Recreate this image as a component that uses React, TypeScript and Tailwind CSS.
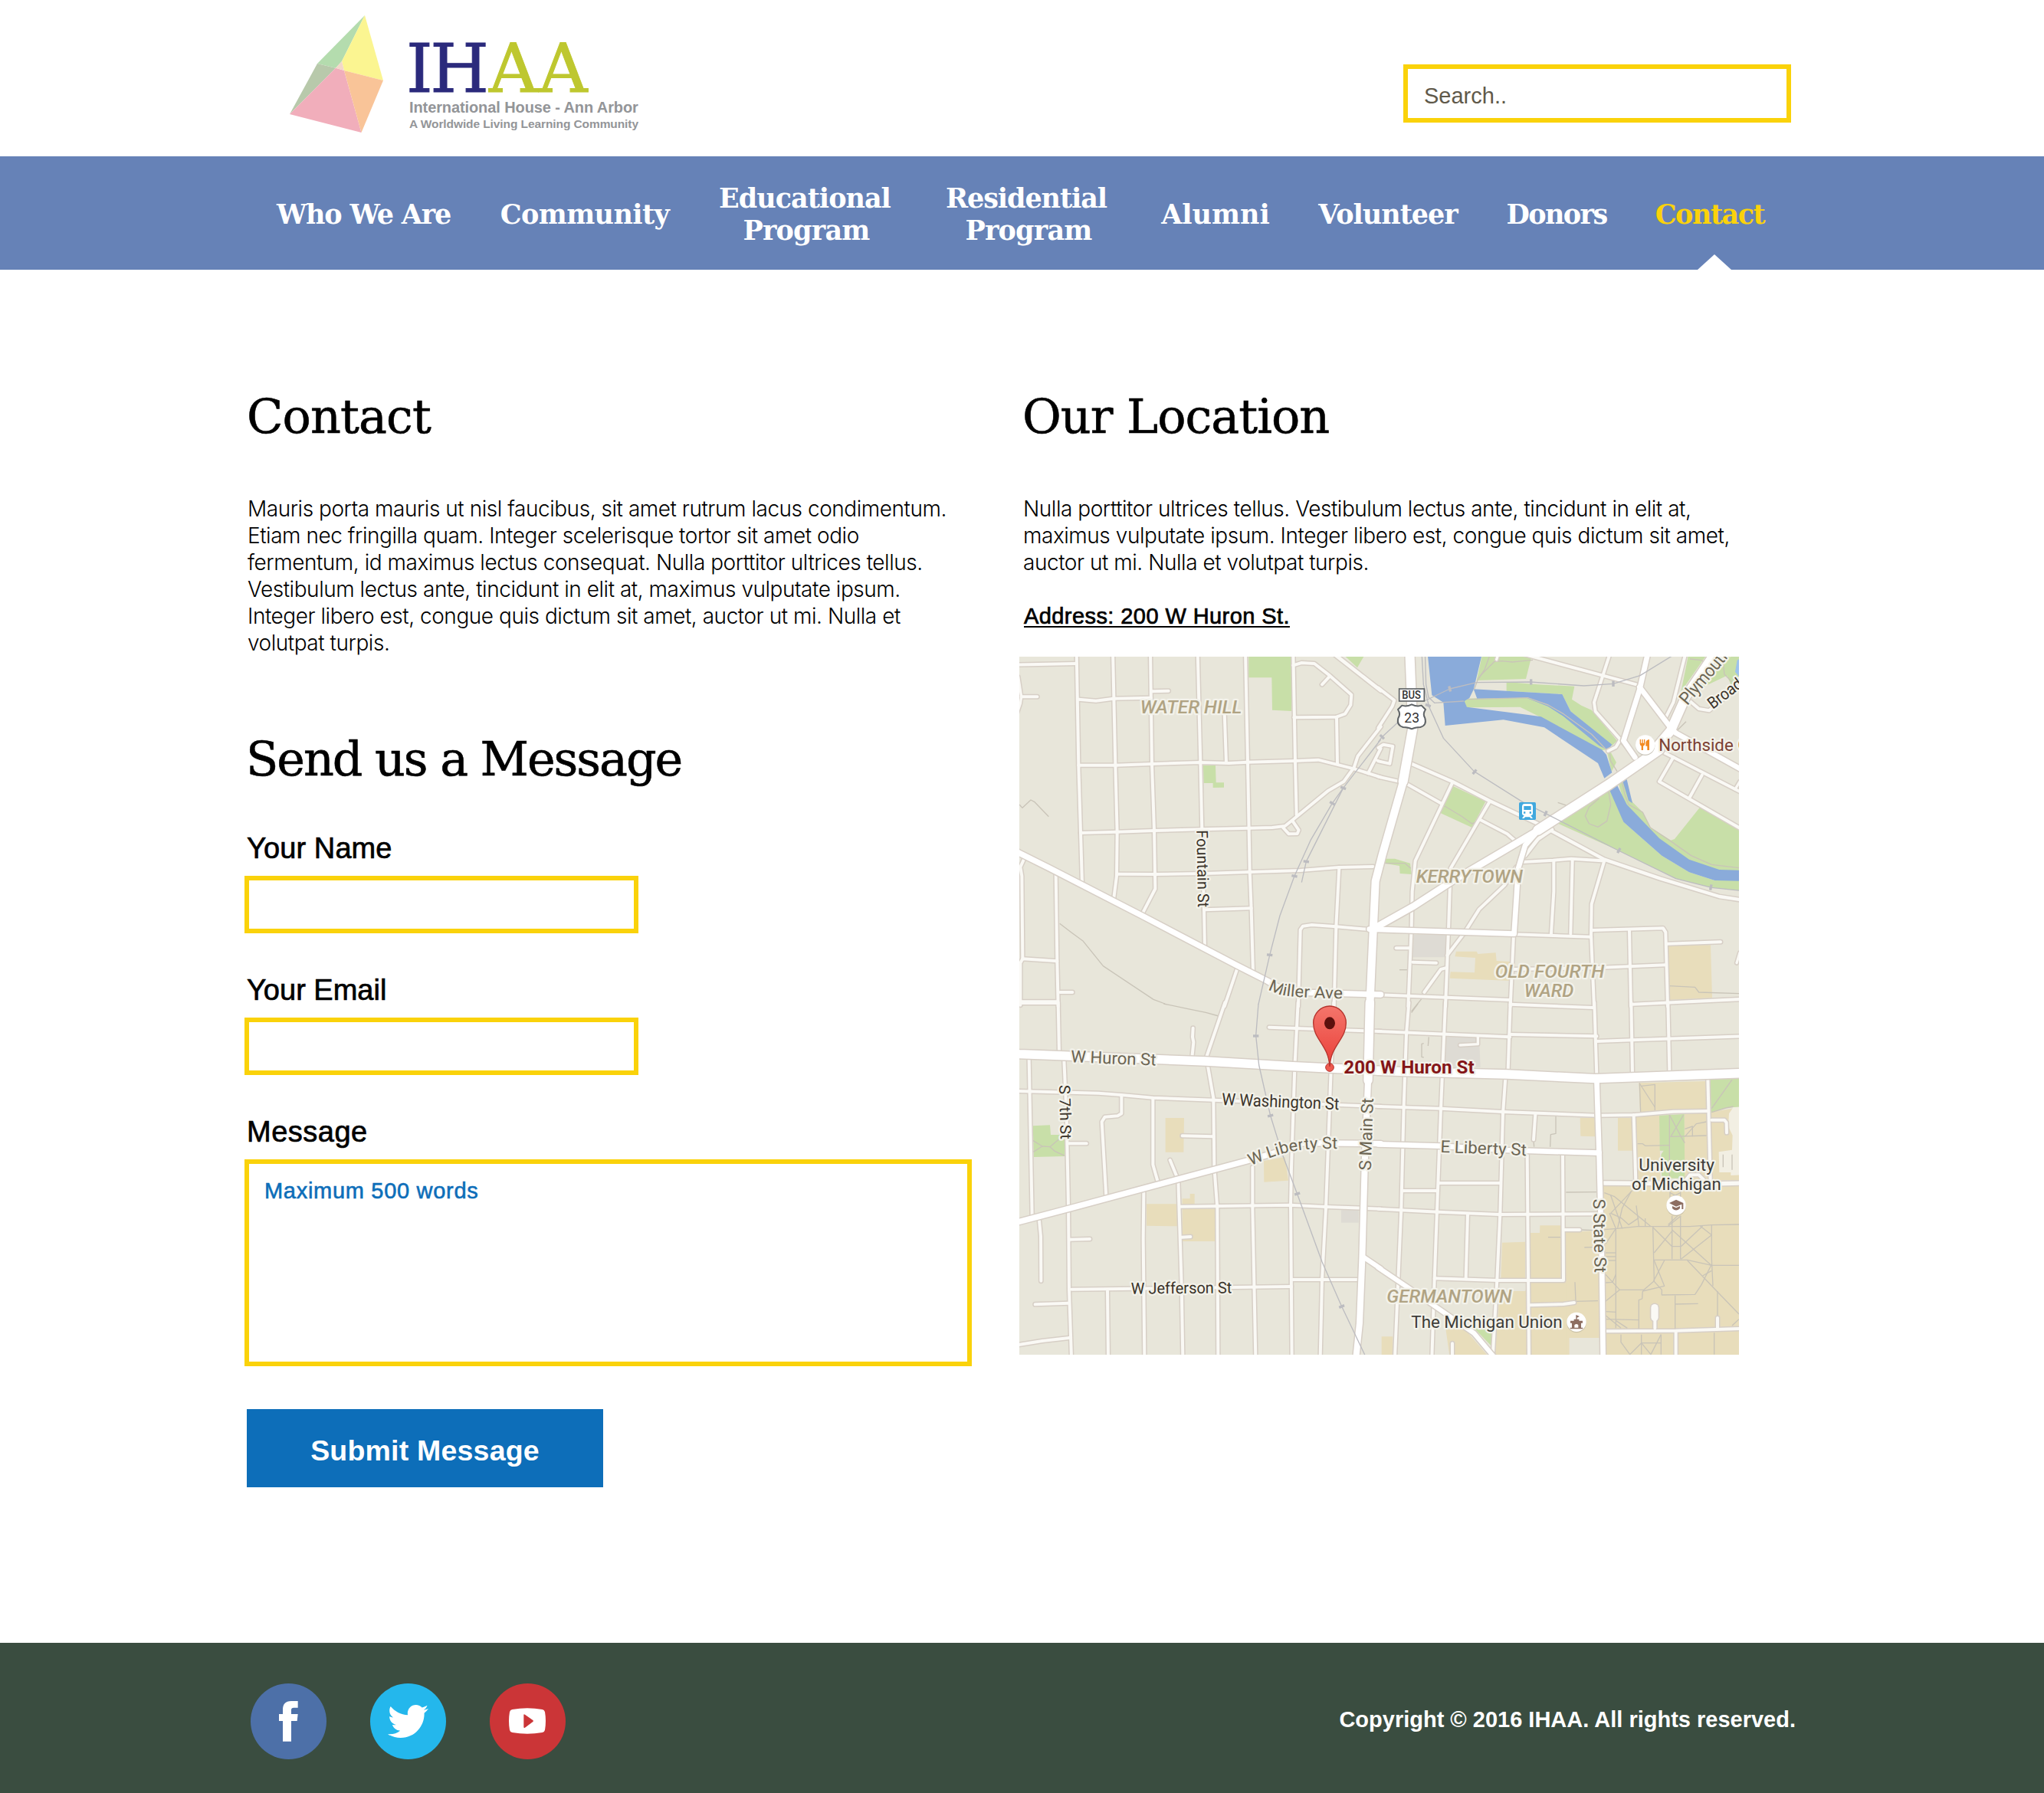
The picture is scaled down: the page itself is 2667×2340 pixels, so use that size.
import React from "react";
import { FaTwitter } from "react-icons/fa";

/* ------------------------------------------------------------------ */
/* Map data. Coordinates are in map units (3 per pixel), by quadrant.  */
/* ------------------------------------------------------------------ */

type Road = [width: number, points: string];
type Area = [fill: string, points: string];
type Tick = [x: number, y: number, angle: number];

interface Tile {
  x: number;
  y: number;
  areas: Area[];
  paths: string[];
  minor: Road[];
  major: Road[];
  rails: string[];
  ticks: Tick[];
}

const GREEN = "#c8dfa8";
const BEIGE = "#e8ddbb";
const GREY = "#dedbd4";
const WATER = "#8aabda";
const CREAM = "#f2efe3";

const northWest: Tile = {
  x: 0,
  y: 0,
  areas: [
    [GREEN, "928,0 1095,0 1095,234 1020,230 1018,103 928,103"],
    [GREEN, "750,447 798,447 800,514 831,514 831,533 788,534 788,516 752,516"],
    [GREEN, "1285,0 1385,0 1378,21 1353,64"],
  ],
  paths: [
    "30,600 42,613 75,582 90,590 145,647",
    "188,1066 235,1102 280,1135 358,1232 555,1363 600,1380",
  ],
  minor: [
    [12, "254,0 262,450 270,710 276,910"],
    [12, "396,0 406,445 413,710 411,880 400,965"],
    [12, "543,0 549,440 558,700 562,930 510,1030"],
    [12, "728,0 739,435 745,700 753,1010 756,1165"],
    [12, "915,0 924,435 932,860 938,1010 945,1255"],
    [12, "1102,0 1110,430 1115,640"],
    [12, "833,240 840,435"],
    [12, "10,53 254,48"],
    [12, "262,188 330,194 398,185 545,182"],
    [12, "549,157 614,155"],
    [10, "26,100 38,178 34,205 22,240"],
    [12, "38,178 100,178"],
    [12, "262,446 406,446 549,441 739,435 850,438 924,434 1110,429 1200,425 1340,460 1445,493"],
    [12, "270,711 413,707 558,702 745,697 932,692 1020,690 1070,684 1100,660 1240,545 1300,510 1340,455 1355,410 1445,295"],
    [12, "1062,690 1085,715 1118,714 1124,700 1100,665"],
    [12, "415,872 562,873 753,870 935,864 1130,858 1280,846 1415,843"],
    [12, "753,1012 938,1006"],
    [12, "1102,55 1135,45 1185,48 1245,95 1330,170 1327,210 1305,245 1272,257 1105,259"],
    [12, "1272,257 1275,440"],
    [12, "1245,98 1215,130"],
    [14, "1255,5 1445,154"],
    [12, "1395,478 1445,380"],
    [10, "1428,426 1445,432"],
    [12, "1122,1390 1130,1090 1140,1076 1175,1071 1270,1078 1410,1090"],
    [12, "1282,846 1270,1078 1262,1390"],
    [12, "50,810 34,845 40,880 43,1205"],
    [12, "34,1385 34,1220 43,1204 178,1213"],
    [12, "173,870 178,1213 182,1390"],
    [12, "190,1335 238,1335"],
    [12, "34,1372 180,1372"],
    [12, "882,1245 833,1390"],
  ],
  major: [
    [22, "0,772 30,790 150,850 510,1035 882,1230 1000,1290 1060,1325 1110,1335 1445,1344"],
    [30, "1570,300 1530,520 1450,800 1424,900 1408,1250 1402,1390"],
    [36, "1558,0 1570,300 1532,510"],
  ],
  rails: [
    "1445,345 1298,535 1255,595 1170,740 1107,880 1050,1035 1010,1190 966,1382",
    "1298,535 1153,823 1135,905",
  ],
  ticks: [
    [1298, 535, 20],
    [1255, 595, 30],
    [1153, 823, 8],
    [1107, 880, 12],
    [1010, 1189, 6],
  ],
};

const northEast: Tile = {
  x: 1440,
  y: 0,
  areas: [
    [GREEN, "405,0 600,0 573,108 380,114"],
    [GREEN, "497,120 620,130 763,137 753,188 790,212 830,230 930,350 910,370 748,235 715,168 497,155"],
    [GREEN, "340,185 575,178 660,208 720,243 890,385 870,388 632,259 550,218 342,220 330,195"],
    [GREEN, "1212,0 1290,0 1180,158"],
    [GREEN, "1407,0 1345,21 1245,150 1360,95 1380,140 1407,100"],
    [GREEN, "700,675 905,535 955,668 1105,800 1212,865 1312,897 1407,895 1407,937 1300,925 1160,890 935,780"],
    [GREEN, "930,500 950,495 990,590 1030,630 1060,690 1140,740 1155,735 1255,610 1407,690 1407,860 1330,858 1212,818 1095,735 960,600"],
    [GREEN, "288,528 415,588 362,690 238,633"],
    [GREEN, "20,812 60,812 120,830 125,873 80,870 78,840 20,830"],
    [GREEN, "890,390 905,395 927,435 908,472"],
    [WATER, "187,0 404,0 368,150 352,183 332,195 342,218 560,246 632,256 870,385 888,405 910,475 880,497 855,438 645,298 485,268 257,291 250,200 205,172"],
    [WATER, "368,148 715,168 748,235 910,365 895,388 860,370 720,255 660,216 575,182 382,185"],
    [GREEN, "640,214 715,252 862,378 830,362 700,280"],
    [WATER, "898,538 927,518 968,600 1095,732 1212,815 1330,855 1410,857 1410,899 1312,897 1212,865 1105,800 955,668"],
    [WATER, "950,502 968,502 990,595 975,585"],
    ["#9dc2ec", "1400,35 1408,30 1408,100 1392,80"],
    [BEIGE, "300,1175 380,1175 385,1185 455,1180 458,1212 515,1215 515,1290 275,1280 278,1255 372,1258 375,1200 295,1195"],
    [BEIGE, "1130,1150 1296,1150 1302,1357 1130,1365"],
    [GREY, "135,1110 258,1110 258,1198 130,1198"],
  ],
  paths: [
    "345,188 580,182 660,210 720,245 830,325 890,388",
    "385,110 400,90 430,60 450,40 480,38 520,42 560,38 600,34",
    "430,20 412,70 385,110 370,150",
    "245,600 320,645 362,675 390,665",
    "1135,740 1060,690 1030,630 975,600 960,560 948,505",
    "1135,740 1220,800 1300,835 1407,848",
    "860,575 820,610 805,645 820,675 855,688 890,665 905,600 895,540",
    "698,592 745,608",
    "1200,275 1160,315",
    "20,830 100,830 122,850",
    "900,390 905,430 930,470",
    "1215,30 1260,35 1290,60 1280,110",
    "1345,45 1350,90 1380,120",
    "1135,1310 1235,1315 1250,1335 1407,1340",
    "78,1247 125,1247",
    "165,1360 125,1410",
  ],
  minor: [
    [12, "-5,143 58,192 50,215 -5,300"],
    [12, "-5,378 15,365 52,372 40,440 -5,430"],
    [13, "125,440 285,510 430,585 630,680 880,815 1100,890 1330,960 1415,973"],
    [12, "-5,491 100,515 240,595"],
    [12, "285,515 140,820 128,940 125,1080 112,1390"],
    [12, "430,590 278,850 270,1090 258,1390"],
    [12, "395,660 500,715 540,750"],
    [12, "560,825 680,818 750,812 870,820"],
    [14, "570,800 620,735 675,698"],
    [12, "880,820 830,990 828,1110 840,1390"],
    [12, "682,820 682,940 672,1105"],
    [12, "755,818 748,1105"],
    [12, "525,1108 828,1118"],
    [12, "835,1092 1110,1084 1120,1100 1128,1390"],
    [12, "1127,1145 1335,1138"],
    [12, "978,1095 984,1390"],
    [12, "520,1245 835,1240 1120,1228"],
    [12, "535,845 490,915 390,1010 330,1105 265,1190"],
    [12, "65,1162 120,1162"],
    [12, "130,1217 222,1220"],
    [12, "258,1240 240,1245 175,1335"],
    [12, "-5,1345 510,1365"],
    [12, "512,1382 835,1395"],
    [12, "990,1382 1415,1362"],
    [12, "560,10 1005,130"],
    [12, "905,0 840,200 845,235 1000,410"],
    [12, "895,390 925,375 940,350"],
    [12, "1200,0 1150,200 1120,260"],
    [12, "1150,415 1095,510 1415,695"],
    [12, "1100,390 1150,415 1415,552"],
    [12, "1262,485 1215,570"],
    [10, "1392,540 1410,510"],
    [12, "1215,195 1250,225 1290,232 1415,130"],
    [10, "1398,1220 1410,1180"],
    [10, "465,10 458,32"],
    [12, "525,1108 512,1390"],
  ],
  major: [
    [20, "1052,0 1018,150 955,350 1000,415"],
    [20, "1018,140 1140,300 1160,320 1415,462"],
    [26, "-30,1090 130,1000 300,890 640,690"],
    [38, "620,700 900,520 1095,385"],
    [36, "1060,405 1140,310 1200,175 1325,-10"],
    [20, "610,715 570,760 543,850 535,980 527,1100"],
    [20, "-40,1088 527,1106"],
  ],
  rails: [
    "165,0 172,130 195,220 250,340 370,470 560,590 650,635 935,780 1160,890 1300,925 1415,937",
    "175,195 275,147 380,122 590,120 800,135 915,127 1020,95 1150,15",
    "178,0 182,130 192,180 215,202 330,195",
    "75,275 10,335 -5,355",
  ],
  ticks: [
    [372, 472, -50],
    [650, 635, -65],
    [937, 780, -60],
    [1297, 924, -78],
    [275, 147, 75],
    [593, 120, 90],
    [915, 127, 90],
    [10, 335, 45],
    [190, 212, 20],
  ],
};

const southWest: Tile = {
  x: 0,
  y: 1380,
  areas: [
    [GREEN, "83,478 150,475 153,513 208,513 208,597 87,600"],
    [BEIGE, "602,447 675,447 673,581 602,581"],
    [BEIGE, "528,784 650,784 650,871 528,869"],
    [BEIGE, "668,763 698,763 698,744 716,744 716,790 668,785"],
    [BEIGE, "668,803 795,803 797,930 668,930"],
    [BEIGE, "987,615 1070,600 1083,692 988,698"],
    [GREY, "1290,808 1358,808 1358,857 1290,857"],
  ],
  paths: ["595,0 690,20 760,34 810,48", "83,535 120,558 150,560 185,530", "150,560 170,578 208,595", "120,558 85,580"],
  minor: [
    [12, "182,-5 186,190"],
    [12, "30,-3 180,-3"],
    [12, "68,215 80,830"],
    [12, "205,220 215,440 222,790 225,1120 234,1385"],
    [12, "15,342 340,350 430,357 553,368 790,377 1445,402"],
    [12, "430,362 430,430 415,439 365,443 353,462 370,755"],
    [12, "553,370 553,630 573,700"],
    [12, "620,612 652,690 665,1100 670,1385"],
    [12, "835,-5 762,210 790,370 793,640 805,800 808,1385"],
    [12, "710,95 708,130 712,150 706,210"],
    [12, "668,517 790,520"],
    [12, "517,740 515,920 520,1385"],
    [12, "660,794 1090,788 1230,795 1445,803"],
    [12, "943,640 943,800 955,1385"],
    [12, "1121,-5 1108,250 1095,640 1092,790 1097,1385"],
    [12, "1261,-5 1250,260 1230,800 1215,1080 1208,1385"],
    [12, "1008,92 1445,108"],
    [12, "225,547 293,547"],
    [12, "225,923 306,921"],
    [12, "108,850 114,910 115,1085"],
    [12, "92,1177 225,1172"],
    [12, "235,1118 665,1113 1095,1107"],
    [12, "375,1125 378,1385"],
    [12, "15,1337 120,1320 225,1308"],
    [12, "665,914 700,912"],
    [12, "1100,1080 1355,1080"],
  ],
  major: [
    [34, "0,195 30,197 760,225 1100,245 1445,262"],
    [22, "10,858 30,853 220,803 640,690 920,615 1060,575 1140,545 1445,548"],
    [34, "1402,-5 1395,300"],
    [24, "1396,280 1383,600 1372,1000 1362,1250 1348,1385"],
    [18, "1375,990 1445,1037"],
  ],
  rails: ["966,0 956,125 968,240 1013,438 1060,590 1118,745 1215,1010 1292,1185 1385,1380"],
  ticks: [
    [956, 126, 0],
    [1013, 438, -12],
    [1118, 744, -18],
    [1292, 1185, -22],
  ],
};

const southEast: Tile = {
  x: 1440,
  y: 1380,
  areas: [
    [BEIGE, "875,710 1410,710 1410,1385 875,1385"],
    [BEIGE, "785,447 842,447 845,520 787,518"],
    [BEIGE, "933,447 992,447 995,575 933,575"],
    [BEIGE, "1015,310 1280,303 1280,420 1020,425"],
    [BEIGE, "1005,440 1095,437 1100,690 1005,690"],
    [BEIGE, "1193,432 1290,425 1410,405 1410,690 1193,690"],
    [BEIGE, "480,935 570,932 570,1075 475,1075"],
    [BEIGE, "590,897 627,897 628,868 710,868 710,1075 590,1075"],
    [BEIGE, "725,895 865,887 868,1385 725,1385"],
    [BEIGE, "470,1125 570,1125 590,1092 730,1092 730,1385 452,1385"],
    [BEIGE, "258,1265 330,1270 430,1385 275,1385"],
    [BEIGE, "8,1303 52,1303 50,1385 8,1385"],
    ["#e8e6da", "743,1308 865,1308 865,1385 743,1385"],
    [GREEN, "1295,297 1410,290 1410,403 1355,408 1297,425"],
    [GREEN, "1095,437 1193,432 1195,683 1105,683 1102,590 1112,575 1097,575"],
    [GREEN, "370,1270 438,1275 438,1340"],
    [GREY, "258,130 390,130 395,248 258,250"],
    [CREAM, "1385,405 1410,405 1410,670 1375,672 1375,660 1330,660 1328,580 1380,572 1382,515 1365,480 1368,430"],
  ],
  paths: [
    "150,0 125,35",
    "193,130 190,165",
    "173,155 165,157 165,208 173,210",
    "690,440 690,508 670,512 668,560",
    "603,535 605,560",
    "730,738 850,737",
    "660,914 708,914",
    "785,885 840,887 930,880 1010,872 1215,872 1300,866 1407,864",
    "802,954 840,953",
    "765,1090 768,1165 855,1163",
    "1018,310 1022,425",
    "1018,312 1078,405",
    "1025,322 1078,316 1078,418",
    "1380,297 1300,410",
    "1300,425 1355,408 1385,402",
    "1135,435 1135,700",
    "1135,435 1180,520 1195,545",
    "1190,435 1140,520 1280,516",
    "1195,520 1240,470 1280,462",
    "1195,490 1225,480 1225,520",
    "1010,548 1030,548 1040,556 1135,554",
    "880,740 920,755 1060,870",
    "905,750 950,880",
    "990,730 905,820 945,838 975,865 1015,838",
    "985,735 950,800 932,878",
    "1005,790 1015,870",
    "900,820 925,880 925,1270",
    "1040,840 1040,870",
    "1070,872 1075,1085 1035,1120 940,1120 885,1060",
    "925,880 885,940",
    "925,1060 912,1090 885,1092",
    "1070,875 1145,950 1180,950 1265,870",
    "1145,830 1145,1000",
    "1178,830 1178,1000",
    "1130,865 1178,820",
    "1180,830 1130,870",
    "1145,885 1300,1025",
    "1255,870 1300,905 1180,1000",
    "1145,890 1075,975",
    "1300,866 1300,1000 1305,1105",
    "1072,1003 1205,1003 1300,1024 1407,1024",
    "1205,1005 1325,1130 1407,1215",
    "1075,1005 1115,1105 1030,1125",
    "1115,1005 1073,1085",
    "1073,1085 1105,1120 1105,1140 1235,1138 1260,1100 1300,1020",
    "1300,1045 1265,1065",
    "1030,1125 1028,1155 1015,1160 1015,1275",
    "940,1120 885,1165",
    "885,975 925,975",
    "885,990 925,990",
    "885,1005 925,1005",
    "885,1205 925,1207",
    "885,1235 1015,1238",
    "885,1220 945,1270",
    "925,1240 970,1270",
    "1157,1142 1157,1275",
    "1157,1176 1247,1174",
    "1323,1125 1323,1225",
    "1380,1260 1407,1235",
    "945,1295 945,1325 980,1373 1025,1328 1062,1373 1102,1295",
    "1025,1295 1025,1373",
    "1102,1295 1102,1373",
    "1025,1328 1102,1328",
    "1310,1288 1310,1373",
    "1137,700 1137,760 1178,740",
    "1178,700 1178,760 1137,740",
    "1345,590 1345,640",
    "1380,590 1380,650",
  ],
  minor: [
    [12, "115,-5 105,120 95,400 85,800 60,1385"],
    [12, "258,-5 240,410 225,810 215,1080 205,1385"],
    [12, "512,-5 503,260"],
    [12, "493,290 483,430 472,820 460,1080 443,1385"],
    [12, "841,-5 850,280"],
    [12, "985,-5 990,270"],
    [12, "1129,-5 1135,265"],
    [12, "-5,108 510,130"],
    [12, "515,120 850,127"],
    [12, "850,147 990,142 1415,127"],
    [10, "315,162 385,158 385,130"],
    [12, "-5,402 240,410 480,423 850,437 1000,435 1150,422 1285,420"],
    [12, "1285,290 1295,690"],
    [12, "995,435 1003,695"],
    [12, "610,432 603,532"],
    [12, "578,585 580,820 585,1385"],
    [12, "717,590 720,1080"],
    [12, "235,702 470,702"],
    [12, "90,732 225,732"],
    [12, "-5,803 230,815 470,825 850,823"],
    [12, "345,825 338,1075"],
    [12, "215,1075 460,1083 720,1083"],
    [12, "590,1180 720,1176 762,1170"],
    [12, "725,885 783,885"],
    [16, "880,702 1300,705 1415,702"],
    [12, "1195,695 1215,670 1250,670 1270,690"],
    [12, "880,1282 1160,1280 1415,1272"],
    [12, "1160,1285 1160,1385"],
    [12, "285,1330 285,1385"],
    [28, "1077,1190 1077,1228"],
    [12, "1078,1228 1078,1270"],
    [12, "1323,1230 1323,1270"],
    [12, "1300,455 1350,455 1358,465 1359,505"],
  ],
  major: [
    [34, "-5,262 100,266 500,276 845,293 1415,272"],
    [20, "-5,550 240,557 500,573 860,584"],
    [20, "850,292 860,600 870,1000 875,1385"],
    [18, "-5,1033 110,1110 370,1290 450,1385"],
  ],
  rails: [],
  ticks: [],
};

const TILES = [northWest, northEast, southWest, southEast];

const shift = (t: Tile) => `translate(${t.x} ${t.y})`;

function Roads({ kind, casing }: { kind: "minor" | "major"; casing: boolean }) {
  return (
    <>
      {TILES.map((t, i) => (
        <g key={i} transform={shift(t)} fill="none" strokeLinecap="round" strokeLinejoin="round">
          {t[kind].map(([w, pts], j) => (
            <polyline
              key={j}
              points={pts}
              strokeWidth={casing ? w + 9 : w}
              stroke={casing ? "#d7cfc6" : kind === "major" ? "#ffffff" : "#faf9f5"}
            />
          ))}
        </g>
      ))}
    </>
  );
}

interface LabelProps {
  x: number;
  y: number;
  w: number;
  size?: number;
  fill?: string;
  rotate?: number;
  italic?: boolean;
  weight?: number;
  children: string;
}

const ROAD_TEXT = "#6b6452";
const DARK_TEXT = "#3a3229";

function Label({ x, y, w, size = 66, fill = ROAD_TEXT, rotate = 0, italic, weight = 400, children }: LabelProps) {
  return (
    <text
      transform={`translate(${x} ${y}) rotate(${rotate})`}
      textLength={w}
      lengthAdjust="spacingAndGlyphs"
      fontSize={size}
      fontWeight={weight}
      fontStyle={italic ? "italic" : "normal"}
      fill={fill}
      stroke="#f3f2ea"
      strokeWidth={14}
      strokeLinejoin="round"
      paintOrder="stroke"
    >
      {children}
    </text>
  );
}

function District({ x, y, w, children }: { x: number; y: number; w: number; children: string }) {
  return (
    <Label x={x} y={y} w={w} size={69} fill="#b0a383" italic weight={500}>
      {children}
    </Label>
  );
}

function LocationMap() {
  return (
    <svg
      viewBox="30 21 2817 2733"
      className="block h-[911px] w-[939px]"
      fontFamily="Roboto, 'Liberation Sans', sans-serif"
      role="img"
      aria-label="Map of 200 W Huron St"
    >
      <defs>
        <linearGradient id="pin" x1="0" y1="0" x2="0" y2="1">
          <stop offset="0" stopColor="#f4756b" />
          <stop offset="1" stopColor="#ea3f38" />
        </linearGradient>
        <path id="miller" d="M1003,1322 Q1030,1340 1070,1348 T1300,1360" />
        <path id="liberty" d="M936,2014 Q1010,1980 1080,1962 T1290,1948" />
      </defs>
      <rect x="0" y="0" width="2900" height="2800" fill="#e8e6da" />
      {TILES.map((t, i) => (
        <g key={i} transform={shift(t)}>
          {t.areas.map(([fill, pts], j) => (
            <polygon key={j} points={pts} fill={fill} />
          ))}
          <g fill="none" stroke="#c9c4b8" strokeWidth="4" strokeLinejoin="round">
            {t.paths.map((pts, j) => (
              <polyline key={j} points={pts} />
            ))}
          </g>
        </g>
      ))}
      <Roads kind="minor" casing />
      <Roads kind="minor" casing={false} />
      <Roads kind="major" casing />
      <Roads kind="major" casing={false} />
      {TILES.map((t, i) => (
        <g key={i} transform={shift(t)} fill="none" stroke="#bcbcc0">
          {t.rails.map((pts, j) => (
            <polyline key={j} points={pts} strokeWidth="4" strokeLinejoin="round" />
          ))}
          {t.ticks.map(([x, y, a], j) => (
            <path key={j} d="M-11,0H11" strokeWidth="10" transform={`translate(${x} ${y}) rotate(${a})`} />
          ))}
        </g>
      ))}

      <District x={503} y={242} w={398}>WATER HILL</District>
      <District x={1583} y={905} w={418}>KERRYTOWN</District>
      <District x={1892} y={1277} w={428}>OLD FOURTH</District>
      <District x={2006} y={1352} w={194}>WARD</District>
      <District x={1468} y={2549} w={490}>GERMANTOWN</District>

      <Label x={724} y={700} w={303} size={62} rotate={89} fill={DARK_TEXT}>Fountain St</Label>
      <Label x={186} y={1698} w={213} size={60} rotate={88.5} fill={DARK_TEXT}>S 7th St</Label>
      <Label x={231} y={1609} w={334} rotate={2.2}>W Huron St</Label>
      <Label x={822} y={1776} w={460} rotate={2.3} fill={DARK_TEXT}>W Washington St</Label>
      <Label x={467} y={2516} w={395} size={62} rotate={-0.5} fill={DARK_TEXT}>W Jefferson St</Label>
      <Label x={1406} y={2033} w={284} rotate={-88}>S Main St</Label>
      <Label x={1678} y={1961} w={337} rotate={2.3}>E Liberty St</Label>
      <Label x={2276} y={2144} w={289} rotate={88.8}>S State St</Label>
      <Label x={2455} y={2033} w={296} fill="#3d3c38">University</Label>
      <Label x={2427} y={2108} w={350} fill="#3d3c38">of Michigan</Label>
      <Label x={1564} y={2648} w={592} fill="#3d3c38">The Michigan Union</Label>
      <Label x={2645} y={214} w={360} size={70} rotate={-50}>Plymouth Rd</Label>
      <Label x={2744} y={228} w={255} size={64} rotate={-37} fill={DARK_TEXT}>Broadway</Label>
      <Label x={2533} y={389} w={292} fill="#7b4033">Northside</Label>
      <Label x={2842} y={389} w={120} fill="#7b4033">Grill</Label>
      {[
        { id: "#miller", w: 298, text: "Miller Ave" },
        { id: "#liberty", w: 350, text: "W Liberty St" },
      ].map((l) => (
        <text
          key={l.id}
          fontSize="64"
          fill={ROAD_TEXT}
          stroke="#f3f2ea"
          strokeWidth="14"
          strokeLinejoin="round"
          paintOrder="stroke"
          textLength={l.w}
          lengthAdjust="spacingAndGlyphs"
        >
          <textPath href={l.id} textLength={l.w} lengthAdjust="spacingAndGlyphs">{l.text}</textPath>
        </text>
      ))}

      {/* US 23 business route */}
      <g transform="translate(1440 0)">
        <rect x="77" y="147" width="98" height="48" fill="#fff" stroke="#5f6366" strokeWidth="5" />
        <text x="88" y="187" fontSize="44" fontWeight="500" fill="#333" textLength="74" lengthAdjust="spacingAndGlyphs">BUS</text>
        <path
          d="M88,212 Q105,218 126,208 Q147,218 164,212 L180,228 Q168,245 178,262 Q186,290 160,297 Q138,298 126,304 Q114,298 92,297 Q66,290 73,262 Q84,245 72,228 Z"
          fill="#fff"
          stroke="#5f6366"
          strokeWidth="6"
          strokeLinejoin="round"
        />
        <text x="97" y="280" fontSize="56" fill="#333" textLength="59" lengthAdjust="spacingAndGlyphs">23</text>
      </g>

      {/* Transit stop */}
      <g transform="translate(1440 0)">
        <rect x="546" y="591" width="66" height="69" rx="5" fill="#41a8de" />
        <path
          fillRule="evenodd"
          fill="#fff"
          d="M568,597 H590 Q600,598 600,608 V636 Q600,642 592,643 L600,654 H592 L588,649 H570 L566,654 H558 L566,643 Q558,642 558,636 V608 Q558,598 568,597 Z M565,606 V621 H593 V606 Z M564,628 V635 H571 V628 Z M587,628 V635 H594 V628 Z"
        />
      </g>

      {/* Restaurant */}
      <circle cx="2480" cy="370" r="38" fill="#cbc7bc" />
      <circle cx="2480" cy="366" r="38" fill="#fff" />
      <path
        fill="#f28a22"
        d="M2459,345 h4 v14 h4 v-14 h4 v14 h4 v-14 h4 v17 q0,6 -7,9 v16 h-7 v-16 q-6,-3 -6,-9 Z M2496,345 v42 h-8 v-16 h-6 v-14 q2,-10 14,-12 Z"
      />

      {/* University */}
      <circle cx="2601" cy="2173" r="38" fill="#cbc2a8" />
      <circle cx="2601" cy="2169" r="38" fill="#fff" />
      <path
        fill="#8d6e62"
        d="M2574,2160 L2601,2147 L2629,2160 V2184 H2623 V2165 L2601,2174 Z M2586,2172 L2601,2179 L2616,2172 V2181 Q2601,2196 2586,2181 Z"
      />

      {/* Michigan Union */}
      <circle cx="2211" cy="2630" r="38" fill="#cbc2a8" />
      <circle cx="2211" cy="2626" r="38" fill="#fff" />
      <path
        fill="#8d6e62"
        d="M2209,2598 l14,6 l-10,5 v6 h8 v6 h14 v9 h-6 v18 h7 v5 h-50 v-5 h7 v-18 h-6 v-9 h14 v-6 h8 Z M2203,2648 h15 v-10 q-7,-8 -15,0 Z"
        fillRule="evenodd"
      />

      {/* Address pin */}
      <circle cx="1245" cy="1629" r="16" fill="#ee5a4f" stroke="#b5332c" strokeWidth="3" />
      <path
        d="M1245,1626 C1240,1540 1181,1520 1181,1455 A64,66 0 0 1 1309,1455 C1309,1520 1250,1540 1245,1626 Z"
        fill="url(#pin)"
        stroke="#b5332c"
        strokeWidth="4"
      />
      <ellipse cx="1245" cy="1456" rx="21" ry="24" fill="#5c100d" />
      <Label x={1300} y={1653} w={511} size={72} weight={700} fill="#841518">200 W Huron St</Label>
    </svg>
  );
}

/* ------------------------------------------------------------------ */
/* Header                                                              */
/* ------------------------------------------------------------------ */

function Logo() {
  return (
    <a href="#" className="flex h-[204px] items-start">
      <svg viewBox="378 20 123 154" className="mt-5 h-[154px] w-[123px]" aria-hidden="true">
        <polygon points="476,20 414,83 438,88.7 446,80" fill="#b4dcae" />
        <polygon points="476,20 500,105 449,92 446,80" fill="#fbf591" />
        <polygon points="414,83 438,88.7 378,149" fill="#b8c9ab" />
        <polygon points="438,88.7 449,92 471.5,173 378,149" fill="#f1aebb" />
        <polygon points="449,92 500,105 471.5,173" fill="#f9c498" />
        <polygon points="446,80 449,92 438,88.7" fill="#f3d8c8" />
      </svg>
      <div className="ml-[33px] mt-[55px] flex flex-col">
        <div className="flex font-['DejaVu_Serif',serif] text-[88px] leading-[70px] [-webkit-text-stroke:1px_currentColor]">
          <span className="-ml-1 w-[108px] whitespace-nowrap tracking-[-3.5px] text-[#2b2a7c]">IH</span>
          <span className="tracking-[1.5px] text-[#bec72f]">AA</span>
        </div>
        <span className="mt-[3px] whitespace-nowrap text-[20px] font-bold leading-6 tracking-[-0.1px] text-[#939598]">
          International House - Ann Arbor
        </span>
        <span className="mt-px whitespace-nowrap text-[15.5px] font-bold leading-[18px] tracking-[-0.09px] text-[#939598]">
          A Worldwide Living Learning Community
        </span>
      </div>
    </a>
  );
}

function NavBar() {
  return (
    <nav className="h-[148px] bg-[#6682b7] pl-[361px] pt-[4px] font-['DejaVu_Serif',serif] text-[35px] font-bold leading-[42px] text-white">
      <ul className="flex h-full items-center gap-16 whitespace-nowrap text-center">
        <li className="flex w-[227px] justify-center tracking-[-1.2px]">Who We Are</li>
        <li className="flex w-[222px] justify-center tracking-[-0.6px]">Community</li>
        <li className="mr-2 flex w-[224px] flex-col items-center">
          <span className="tracking-[-1px]">Educational</span>
          <span className="ml-1 tracking-[-0.8px]">Program</span>
        </li>
        <li className="mr-2 flex w-[210px] flex-col items-center">
          <span className="tracking-[-1.1px]">Residential</span>
          <span className="ml-1.5 tracking-[-0.8px]">Program</span>
        </li>
        <li className="flex w-[140px] justify-center">Alumni</li>
        <li className="flex w-[182px] justify-center tracking-[-1px]">Volunteer</li>
        <li className="flex w-[130px] justify-center tracking-[-1.6px]">Donors</li>
        <li className="relative flex w-[142px] justify-center tracking-[-1.5px] text-[#fad20a]">
          Contact
          <svg viewBox="0 0 44 20" className="absolute -bottom-[51px] left-[55px] h-5 w-11" aria-hidden="true">
            <polygon points="22,0 44,20 0,20" fill="#ffffff" />
          </svg>
        </li>
      </ul>
    </nav>
  );
}

/* ------------------------------------------------------------------ */
/* Content                                                             */
/* ------------------------------------------------------------------ */

function Lines({ lines, className }: { lines: string[]; className: string }) {
  return (
    <p
      className={`mt-[67px] whitespace-nowrap font-['Inter','Liberation_Sans',sans-serif] text-[28px] font-light leading-[35px] tracking-[-0.46px] text-black ${className}`}
    >
      {lines.map((text) => (
        <span key={text} className="block">
          {text}
        </span>
      ))}
    </p>
  );
}

const headingClass =
  "whitespace-nowrap font-['DejaVu_Serif',serif] text-[62px] leading-[72px] text-black [-webkit-text-stroke:0.6px_currentColor]";
const labelClass = "ml-[3px] block text-[38px] leading-[44px] text-black [-webkit-text-stroke:0.7px_currentColor]";
const fieldClass = "mt-[14px] block border-[6px] border-[#fad20a] bg-white outline-none";

function ContactColumn() {
  return (
    <section className="w-[949px]">
      <h1 className={`${headingClass} ml-[3px] tracking-[-0.9px]`}>Contact</h1>
      <Lines
        className="ml-1"
        lines={[
          "Mauris porta mauris ut nisl faucibus, sit amet rutrum lacus condimentum.",
          "Etiam nec fringilla quam. Integer scelerisque tortor sit amet odio",
          "fermentum, id maximus lectus consequat. Nulla porttitor ultrices tellus.",
          "Vestibulum lectus ante, tincidunt in elit at, maximus vulputate ipsum.",
          "Integer libero est, congue quis dictum sit amet, auctor ut mi. Nulla et",
          "volutpat turpis.",
        ]}
      />
      <h2 className={`${headingClass} ml-0.5 mt-[98px] tracking-[-2.1px]`}>Send us a Message</h2>
      <form className="mt-[58px]" onSubmit={(e) => e.preventDefault()}>
        <label htmlFor="name" className={`${labelClass} tracking-[0.1px]`}>Your Name</label>
        <input id="name" className={`${fieldClass} h-[75px] w-[514px]`} />
        <label htmlFor="email" className={`${labelClass} mt-[52px]`}>Your Email</label>
        <input id="email" className={`${fieldClass} h-[75px] w-[514px]`} />
        <label htmlFor="message" className={`${labelClass} mt-[52px] tracking-[0.5px]`}>Message</label>
        <textarea
          id="message"
          placeholder="Maximum 500 words"
          className={`${fieldClass} h-[270px] w-[949px] resize-none pl-[20px] pt-[18px] text-[29px] leading-[35px] tracking-[0.7px] [-webkit-text-stroke:0.6px_#0d6eb9] placeholder:text-[#0d6eb9]`}
        />
        <button className="ml-[3px] mt-14 block h-[102px] w-[465px] bg-[#0d6eb9] pt-[7px] text-[37.5px] font-bold leading-none tracking-[0.2px] text-white">
          Submit Message
        </button>
      </form>
    </section>
  );
}

function LocationColumn() {
  return (
    <section className="ml-[62px] w-[939px]">
      <h2 className={`${headingClass} ml-[4px] tracking-[-1px]`}>Our Location</h2>
      <Lines
        className="ml-[5px]"
        lines={[
          "Nulla porttitor ultrices tellus. Vestibulum lectus ante, tincidunt in elit at,",
          "maximus vulputate ipsum. Integer libero est, congue quis dictum sit amet,",
          "auctor ut mi. Nulla et volutpat turpis.",
        ]}
      />
      <p className="ml-1.5 mt-[35px] text-[29px] leading-[35px] tracking-[0.42px] text-black underline decoration-2 underline-offset-[3px] [-webkit-text-stroke:0.7px_currentColor] [text-decoration-skip-ink:none]">
        Address: 200 W Huron St.
      </p>
      <div className="mt-[35px]">
        <LocationMap />
      </div>
    </section>
  );
}

/* ------------------------------------------------------------------ */
/* Footer                                                              */
/* ------------------------------------------------------------------ */

function Footer() {
  return (
    <footer className="flex h-[196px] items-center justify-between bg-[#3a4d40] pl-[327px] pr-[324px] pt-[9px]">
      <div className="flex gap-[57px]">
        <a href="#" aria-label="Facebook" className="size-[99px]">
          <svg viewBox="81 171 297 297" className="size-full">
            <circle cx="229.5" cy="319.5" r="148.5" fill="#4d70a8" />
            <path
              fill="#fff"
              d="M207,398 V318 H192 V291 H207 V274 C207,252 217,240 240,240 H266 V266 H250 C243,266 240,269 240,275 V291 H266 L263,318 H240 V398 Z"
            />
          </svg>
        </a>
        <a href="#" aria-label="Twitter" className="flex size-[99px] items-center justify-center rounded-full bg-[#24b7ec]">
          <FaTwitter className="size-[53px] text-white" />
        </a>
        <a href="#" aria-label="YouTube" className="size-[99px]">
          <svg viewBox="1017 171 297 297" className="size-full">
            <circle cx="1165.5" cy="319.5" r="148.5" fill="#cb3537" />
            <path
              fill="#fff"
              d="M1105,273 Q1164,263 1223,273 Q1231,274 1233,283 Q1239,318 1233,353 Q1231,362 1223,363 Q1164,373 1105,363 Q1097,362 1095,353 Q1089,318 1095,283 Q1097,274 1105,273 Z"
            />
            <path fill="#cb3537" d="M1150,293 Q1151,290 1155,293 L1186,315 Q1190,318 1186,321 L1155,344 Q1151,346 1150,343 Z" />
          </svg>
        </a>
      </div>
      <p className="pb-1 text-[29px] font-bold text-white">Copyright © 2016 IHAA. All rights reserved.</p>
    </footer>
  );
}

export default function App() {
  return (
    <div className="w-[2667px] overflow-hidden bg-white font-['Liberation_Sans',Arial,sans-serif]">
      <header>
        <div className="flex h-[204px] items-start justify-between pl-[378px] pr-[330px]">
          <Logo />
          <input
            type="search"
            placeholder="Search.."
            className="mt-[84px] h-[76px] w-[506px] border-[6px] border-[#fad20a] bg-white pl-[21px] pt-1.5 text-[29px] outline-none placeholder:text-[#5f594a]"
          />
        </div>
        <NavBar />
      </header>
      <main className="flex h-[1792px] items-start pl-[319px] pt-[156px]">
        <ContactColumn />
        <LocationColumn />
      </main>
      <Footer />
    </div>
  );
}
